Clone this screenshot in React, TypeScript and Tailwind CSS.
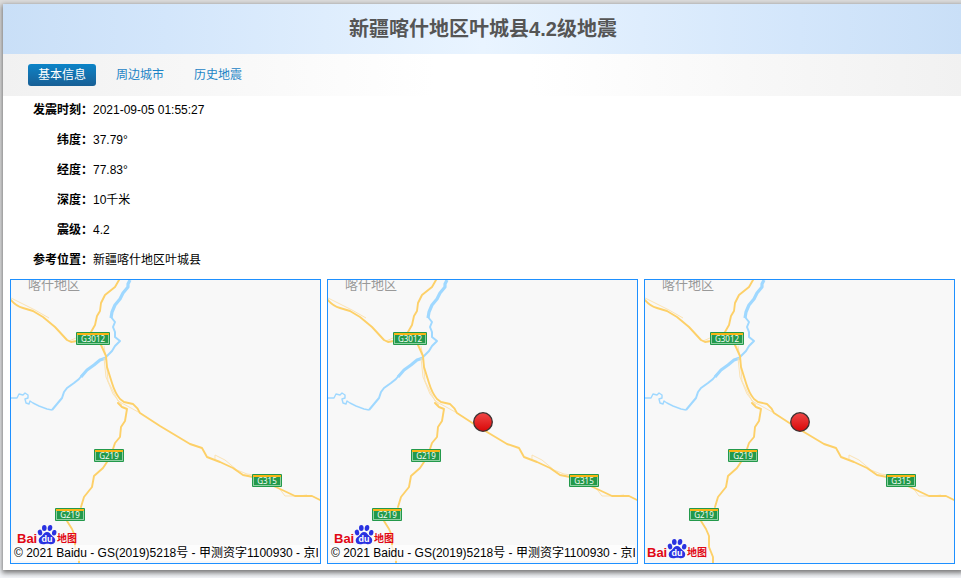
import { useState } from 'react';

const tabs = ['基本信息', '周边城市', '历史地震'];

const details = [
  { label: '发震时刻', value: '2021-09-05 01:55:27' },
  { label: '纬度', value: '37.79°' },
  { label: '经度', value: '77.83°' },
  { label: '深度', value: '10千米' },
  { label: '震级', value: '4.2' },
  { label: '参考位置', value: '新疆喀什地区叶城县' },
];

const maps = [
  { id: 'a', marker: false, copyright: true },
  { id: 'b', marker: true, copyright: true },
  { id: 'c', marker: true, copyright: false },
];

const RoadSign = ({ x, y, width, name }: { x: number; y: number; width: number; name: string }) => (
  <g>
    <rect x={x} y={y} width={width} height="13" rx="1" fill="#23994b" />
    <rect x={x + 1.5} y={y + 1.5} width={width - 3} height="10" fill="none" stroke="#8fd0a3" strokeWidth="1" />
    <rect x={x + 1} y={y + 1} width={width - 2} height="2" fill="#f9b414" />
    <text x={x + width / 2} y={y + 10} textAnchor="middle" fontSize="8" fill="#f2fbf4" fontFamily="Noto Sans, sans-serif">
      {name}
    </text>
  </g>
);

const BaiduLogo = () => (
  <g>
    <text x="6" y="263" fontSize="13" fontWeight="bold" fill="#e10714" fontFamily="Liberation Sans, sans-serif">
      Bai
    </text>
    <g fill="#2932e1">
      <ellipse cx="29" cy="252.5" rx="2.2" ry="2.9" transform="rotate(-12 29 252.5)" />
      <ellipse cx="33.3" cy="248" rx="2.3" ry="3" />
      <ellipse cx="39" cy="248" rx="2.3" ry="3" transform="rotate(8 39 248)" />
      <ellipse cx="43.2" cy="252.8" rx="2.2" ry="2.8" transform="rotate(12 43.2 252.8)" />
      <path d="M36 252c2.4 0 3.2 1.8 4.6 3.3 1.6 1.6 3.8 2.6 3.6 5.4-.2 2.7-2.4 3.6-4.6 3.5-1.5-.1-2.3-.4-3.6-.4s-2.3.5-3.8.5c-2.4 0-4.5-1-4.5-3.8 0-2.5 2-3.5 3.8-5.2 1.5-1.6 2.2-3.3 4.5-3.3z" />
    </g>
    <text x="36" y="262" textAnchor="middle" fontSize="9" fontWeight="bold" fill="#ffffff" fontFamily="Liberation Sans, sans-serif">
      du
    </text>
    <text x="46" y="262" fontSize="10" fontWeight="bold" fill="#e10714" fontFamily="Noto Sans CJK SC, sans-serif">
      地图
    </text>
  </g>
);

const MapCard = ({ id, marker, copyright }: { id: string; marker: boolean; copyright: boolean }) => (
  <div className="relative overflow-hidden border border-[#1e90ff] bg-[#f8f8f8]">
    <svg className="block w-full" viewBox="0 0 309 283" role="img" aria-label="震中地图">
      <defs>
        <linearGradient id={`dot-${id}`} x1="0" y1="0" x2="0" y2="1">
          <stop offset="0" stopColor="#f04848" />
          <stop offset="1" stopColor="#d80808" />
        </linearGradient>
      </defs>

      <g fill="none" stroke="#9fd8ff" strokeLinejoin="round">
        <path strokeWidth="1.4" d="M0 118h6l2-4 4 1 2-2 3 2v3l-3 1 1 4 3 1 1-3 3 2 6 3 8 3 5 1" />
        <path strokeWidth="2" d="M41 130l5-6 5-6 2-6 3-4 7-5 5-4 4-5" />
        <path strokeWidth="3" d="M70 97l6-7 7-5 6-5 6-2" />
        <path strokeWidth="2" d="M93 79l8-8 3-5 5-5-5-4v-5l-2-5 2-5-4-5" />
        <path strokeWidth="3.2" d="M100 38l1-6 3-7 5-6 3-6 5-6v-3l2-4" />
      </g>

      <g fill="none" stroke="#fbe3b4" strokeWidth="1">
        <path d="M0 18l12 6 12 6 14 8M58 61l7-3M93 66l2 12 2 23 10 20 13 7 9 5" />
        <path d="M93 78l2 19 7 17 9 11M204 179v-4l10 5 12 10 10 4 7 1M268 208l6 8h14l8-1" />
      </g>

      <g fill="none" stroke="#fdd068" strokeWidth="1.9" strokeLinecap="round" strokeLinejoin="round">
        <path d="M0 20q5 6 12 8l10 3 10 6 12 10 12 13 4 2 6-1" />
        <path d="M108 0l-4 7-10 8-4 8-1 8-3 5-2 9-4 7" />
        <path d="M90 65l5 11 1 11 5 16q3 10 8 16l4 3 9 2q5 4 7 9l20 13 30 18 12 4 5 9 13 5 13 6 10 7 10 2 25 11 17 8h17l8 4" />
        <path d="M107 123l4 4 5 2-2 12-4 6-1 10-5 6-2 6M96 182l-4 6-9 8-2 11-8 10-3 10M56 241l5 8 3 7v11l4 10v6" />
      </g>

      <text x="17" y="9" fontSize="13" fill="#999999" fontFamily="Noto Sans CJK SC, sans-serif">
        喀什地区
      </text>
      <RoadSign x={65} y={52} width={34} name="G3012" />
      <RoadSign x={83} y={169} width={30} name="G219" />
      <RoadSign x={44} y={228} width={30} name="G219" />
      <RoadSign x={241} y={194} width={30} name="G315" />

      <g transform={copyright ? undefined : 'translate(-4 14)'}>
        <BaiduLogo />
      </g>
      {marker && <circle cx="155" cy="142" r="9.3" fill={`url(#dot-${id})`} stroke="#3c3333" strokeWidth="1.3" />}
    </svg>
    {copyright && (
      <div className="absolute inset-x-0.5 bottom-0.5 overflow-hidden bg-white/70 pl-px text-xs whitespace-nowrap">
        © 2021 Baidu - GS(2019)5218号 - 甲测资字1100930 - 京ICP证030173号
      </div>
    )}
  </div>
);

const App = () => {
  const [activeTab, setActiveTab] = useState(tabs[0]);

  return (
    <div className="min-h-screen overflow-hidden bg-gradient-to-b from-[#dcdcdc] to-[#f2f4f8] pt-1 pl-[3px] font-['Liberation_Sans','Noto_Sans_CJK_SC',sans-serif] text-xs text-black">
      <main className="-mr-0.5 bg-white shadow-[0_2px_5px_1px_#777777]">
        <h1 className="flex h-[50px] items-center justify-center bg-[linear-gradient(to_right,#c9dff7,#d3e6fb_17%,#e9f4ff_50%,#d3e6fb_83%,#c9dff7)] text-xl font-bold text-[#555555]">
          新疆喀什地区叶城县4.2级地震
        </h1>

        <nav className="flex h-[42px] items-center gap-2.5 bg-[linear-gradient(to_right,#f1f1f1,#ffffff_45%,#ffffff_55%,#f1f1f1)] pl-[25px]">
          {tabs.map((tab) => (
            <button
              key={tab}
              type="button"
              onClick={() => setActiveTab(tab)}
              className={
                tab === activeTab
                  ? 'h-[22px] cursor-pointer rounded-[3px] bg-gradient-to-b from-[#0a84c8] to-[#175f95] px-2.5 text-white'
                  : 'h-[22px] cursor-pointer rounded-[3px] px-2.5 text-[#1c84c6]'
              }
            >
              {tab}
            </button>
          ))}
        </nav>

        <dl className="pb-[3px]">
          {details.map((item) => (
            <div key={item.label} className="mb-0.5 flex leading-7">
              <dt className="w-[90px] text-right font-bold">{item.label}：</dt>
              <dd>{item.value}</dd>
            </div>
          ))}
        </dl>

        <div className="grid grid-cols-3 gap-1.5 pr-2 pb-1.5 pl-[7px]">
          {maps.map((map) => (
            <MapCard key={map.id} {...map} />
          ))}
        </div>
      </main>
    </div>
  );
};

export default App;
